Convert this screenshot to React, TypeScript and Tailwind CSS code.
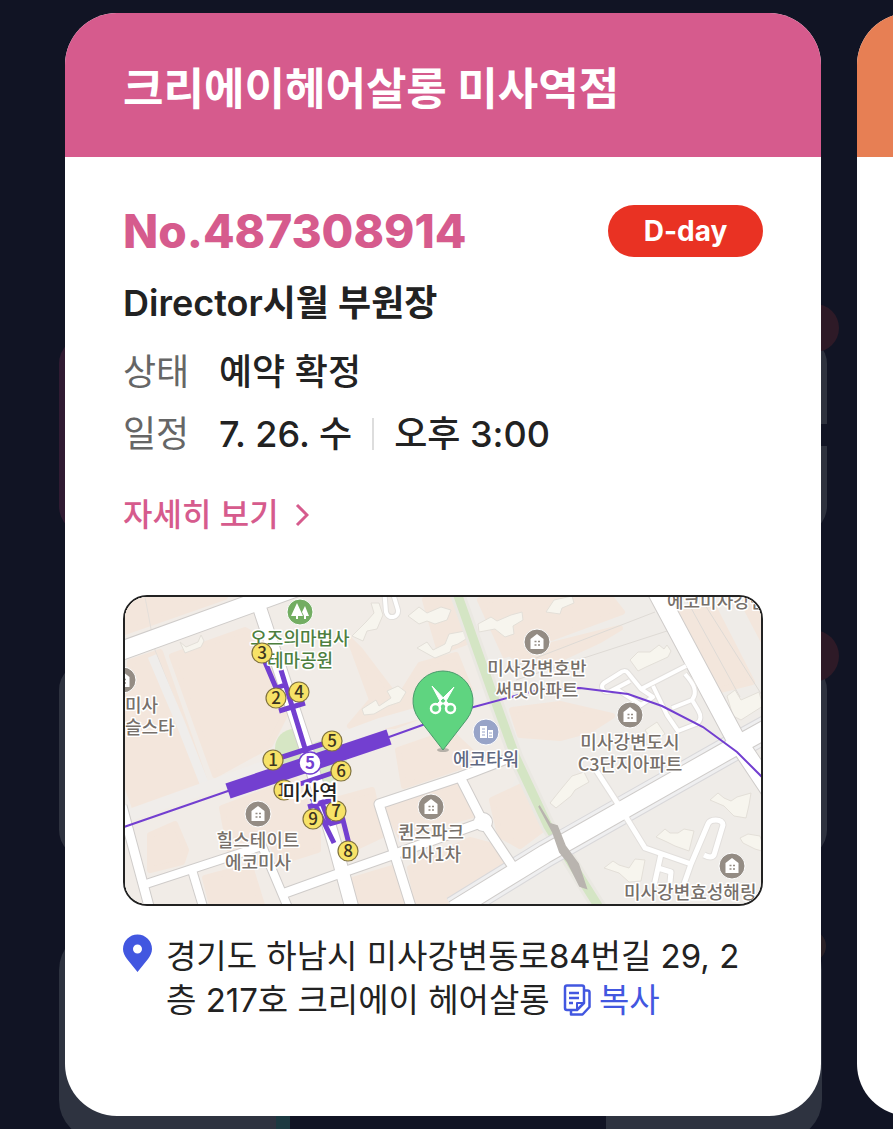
import React from "react";

const details = [
  { label: "상태", values: ["예약 확정"] },
  { label: "일정", values: ["7. 26. 수", "오후 3:00"] },
];

const blocks = [
  "M125 600L225 597L125 632Z",
  "M130 662L160 652L186 727L205 782L135 808L125 780Z",
  "M172 656L245 630L262 640L285 715L270 745L215 775Z",
  "M150 835L175 824L186 850L182 862L150 870Z",
  "M205 878L250 866L262 905L212 905Z",
  "M222 808L296 780L318 832L318 850L280 862L270 840L230 850Z",
  "M336 800L372 790L382 835L350 850Z",
  "M352 880L392 868L404 905L360 905Z",
  "M350 640L372 700L350 726L395 726L430 712L474 700L456 655L420 665L398 700L360 650Z",
  "M425 600L455 600L472 640L440 652Z",
  "M480 600L610 597L622 612L505 655Z",
  "M386 806L455 783L472 815L400 836Z",
  "M410 868L470 840L500 848L503 868L440 905L418 905Z",
  "M492 800L522 786L548 825L520 846L500 835Z",
  "M512 710L560 704L612 716L590 730L560 738L520 735Z",
  "M512 655L620 628L600 640L540 668Z",
  "M398 750L450 732L480 760L404 786Z",
  "M680 612L712 604L752 682L720 690Z",
  "M742 600L763 597L763 640Z",
];

const buildings = [
  "M180 642l6 5l12 -5l3 -7l3 6l-3 6l-16 6z",
  "M362 709l14 -9l3 6l12 -8l-4 -7l11 -5l8 6l-6 10l-12 4l-14 8l-10 1z",
  "M417 648l10 -6l6 8l12 -6l4 -10l16 -3l1 8l-8 5l-6 2l-2 6l-15 6z",
  "M408 616l11 -9l8 6l14 -6l10 3l-4 10l-12 4l-8 -3l-8 3z",
  "M478 624l13 -7l6 4l14 -6l11 -3l1 8l-10 6l1 8l-9 3l-10 -8l-16 3z",
  "M352 636l14 -14l8 -9l-3 -10l8 0l4 12l-6 14l-10 2l-4 10z",
  "M630 660l8 -8l12 0l9 -7l5 4l3 -4l4 6l-3 6l-22 10l-8 4z",
  "M546 612l8 -12l18 -4l2 7l-12 5l-2 6z",
  "M550 803l12 -15l10 -12l12 -4l5 10l-14 8l-4 6l-15 12z",
  "M710 800l8 -7l6 5l7 3l6 -4l14 -4l-2 12l-3 13l-12 -2l-10 -10z",
  "M656 837l9 -8l5 4l8 0l6 -4l10 2l-5 20l-14 -5l-8 -4z",
  "M604 868l9 -7l6 4l10 3l6 -9l10 1l-4 21l-12 1l-10 -9z",
  "M740 838l8 -4l12 2l5 16l-10 -3l-12 -6z",
  "M645 730l12 -8l8 12l-12 8z",
  "M727 696l8 -6l6 10l18 -8l4 14l-22 14l-8 -4z",
];

const roads = [
  { d: "M118 652L300 586", width: 18 },
  { d: "M259 606L305 745L335 845L352 908", width: 13 },
  { d: "M122 806L150 910", width: 9 },
  { d: "M146 884L262 846L289 910", width: 8 },
  { d: "M192 870L204 910", width: 8 },
  { d: "M285 893L335 875L395 854L483 822", width: 9 },
  { d: "M412 910L379 804L460 777L512 757", width: 9 },
  { d: "M460 777L483 822L515 870", width: 9 },
  { d: "M480 822a3 3 0 1 0 6 0a3 3 0 1 0 -6 0", width: 12 },
  { d: "M454 910L545 854L725 752L770 727", width: 18 },
  { d: "M656 590L734 736L770 790", width: 18 },
  { d: "M384 588L386 612C388 620 399 618 398 610L392 590", width: 4 },
  { d: "M686 666L641 689L628 673C626 670 622 671 620 673L604 683C600 686 603 692 607 692L618 690L641 705L653 697L641 689M609 692L630 681", width: 4 },
  { d: "M653 686L667 715L678 731L696 724C702 721 701 715 698 710L692 700L672 708M692 700C698 692 694 684 685 674", width: 4 },
  { d: "M596 770L618 804", width: 5 },
  { d: "M626 817L645 848L691 864L708 824C710 819 722 818 723 825L714 855C712 858 708 857 704 855M691 864L684 884M661 854L654 886M658 868L671 872L670 882", width: 5 },
];

const exits = [
  { n: 3, x: 262, y: 653 },
  { n: 2, x: 276, y: 698 },
  { n: 4, x: 299, y: 692 },
  { n: 5, x: 332, y: 741 },
  { n: 1, x: 273, y: 760 },
  { n: 6, x: 341, y: 771 },
  { n: 7, x: 336, y: 811 },
  { n: 9, x: 313, y: 819 },
  { n: 8, x: 348, y: 851 },
];

const apartments = [
  [123, 680],
  [537, 642],
  [630, 715],
  [258, 814],
  [431, 807],
  [732, 866],
];

const places = [
  { x: 300, y: 645, lines: ["오즈의마법사", "테마공원"], color: "#4d7f3f" },
  { x: 125, y: 712, lines: ["미사", "슬스타"], color: "#77706a", left: true },
  { x: 537, y: 675, lines: ["미사강변호반", "써밋아파트"], color: "#77706a" },
  { x: 630, y: 749, lines: ["미사강변도시", "C3단지아파트"], color: "#77706a" },
  { x: 486, y: 766, lines: ["에코타워"], color: "#606881" },
  { x: 258, y: 847, lines: ["힐스테이트", "에코미사"], color: "#77706a" },
  { x: 431, y: 839, lines: ["퀸즈파크", "미사1차"], color: "#77706a" },
  { x: 624, y: 899, lines: ["미사강변효성해링"], color: "#77706a", left: true },
  { x: 667, y: 608, lines: ["에코미사강변"], color: "#77706a", left: true },
];

const House = ({ x, y }: { x: number; y: number }) => (
  <g transform={`translate(${x} ${y})`}>
    <circle r="13" fill="#948c84" stroke="#fff" strokeWidth="1" />
    <path d="M-6.500 7V-3L0 -8L6.500 -3V7Z" fill="#fff" />
    <path d="M-2.500 -0.500h2M1 -0.500h2M-2.500 3h2M1 3h2" stroke="#948c84" strokeWidth="1.600" />
  </g>
);

const StoreMap = () => (
  <svg viewBox="125 597 636 307" preserveAspectRatio="xMidYMid slice" className="w-full h-full font-['Noto_Sans_CJK_KR',sans-serif]" role="img" aria-label="미사역">
    <rect x="100" y="580" width="700" height="350" fill="#efece8" />
    <path d="M100 580H440L520 770L440 930H100Z" fill="#f1ece7" />
    {blocks.map((d) => (
      <path key={d} d={d} fill="#f3e6dc" stroke="#f3e6dc" strokeWidth="6" strokeLinejoin="round" />
    ))}
    <path d="M145 597L155 650L184 724L208 785M135 812L205 785L182 722M238 790L370 740" fill="none" stroke="#e4dfda" strokeWidth="1" />
    <path d="M152 656L180 722L206 788" fill="none" stroke="#efedeb" strokeWidth="9" />
    <path d="M130 815L228 780L380 724L500 690" fill="none" stroke="#f0edea" strokeWidth="12" />
    <path d="M510 668L655 612M516 680L670 630" fill="none" stroke="#dedad5" strokeWidth="1" />
    <path d="M700 597L765 700M685 597L740 697" fill="none" stroke="#dedad5" strokeWidth="1" />
    {buildings.map((d) => (
      <path key={d} d={d} fill="#f7f5ee" stroke="#e3dfd8" strokeWidth="1" strokeLinejoin="round" />
    ))}

    {/* park strip */}
    <path d="M456 590L492 692L516 758L548 826L602 912" fill="none" stroke="#eae8e2" strokeWidth="15" />
    <path d="M456 590L492 692L516 758L548 826L602 912" fill="none" stroke="#d4e5c4" strokeWidth="9" />
    <circle cx="294" cy="748" r="19" fill="#d6e6c4" />
    <circle cx="325" cy="762" r="22" fill="#dbe8cc" />

    {/* roads */}
    <path d="M454 910L545 854L725 752L770 727" fill="none" stroke="#d9d8da" strokeWidth="28" />
    <path d="M454 910L545 854L725 752L770 727" fill="none" stroke="#efeff0" strokeWidth="26" />
    {roads.map((road) => (
      <path key={road.d} d={road.d} fill="none" stroke={road.width > 5 ? "#cfccca" : "#e2dfdc"} strokeWidth={road.width + 2} strokeLinejoin="round" />
    ))}
    {roads.map((road) => (
      <path key={road.d} d={road.d} fill="none" stroke="#fff" strokeWidth={road.width} strokeLinejoin="round" />
    ))}
    <path d="M539 806L550 824L557 826L565 846L578 864L586 888L580 886L568 862L560 852L553 832Z" fill="#b9b4af" stroke="#b9b4af" strokeWidth="2" />

    {/* subway */}
    <g fill="none" stroke="#733fd0">
      <path d="M118 829L228 791L389 737L470 708L530 692Q555 688 580 688L628 694L662 706L703 727L737 752L765 780" strokeWidth="2" />
      <path d="M228 791L389 737" strokeWidth="16" />
      <path d="M265 662L276 688L285 685M281 670L307 755M279 711L305 703M273 760L332 741M300 784L341 770M312 798L334 843M308 807L332 800M321 800L330 825M329 824L343 820L349 844" strokeWidth="5" />
    </g>

    {places.map((place) => (
      <text
        key={place.lines[0]}
        fill={place.color}
        stroke="#fff"
        strokeWidth="3"
        strokeLinejoin="round"
        paintOrder="stroke"
        fontSize="18"
        fontWeight="500"
        textAnchor={place.left ? "start" : "middle"}
      >
        {place.lines.map((line, i) => (
          <tspan key={line} x={place.x} y={place.y + i * 22}>{line}</tspan>
        ))}
      </text>
    ))}

    {apartments.map(([x, y]) => (
      <House key={`${x}-${y}`} x={x} y={y} />
    ))}

    <circle cx="300" cy="612" r="13" fill="#73ad62" stroke="#fff" strokeWidth="1" />
    <path d="M297 603L291 616H296V619H298V616H303ZM305 606L302 612L304 616V619H306V616H309Z" fill="#fff" />

    <circle cx="486" cy="732" r="13" fill="#98a4c8" stroke="#fff" strokeWidth="1" />
    <path d="M480 726h7v12h-7zM488 730h5v8h-5z" fill="#fff" />
    <path d="M482 729h3M482 732h3M482 735h3M489 733h3M489 736h3" stroke="#98a4c8" strokeWidth="1" />

    <circle cx="284" cy="790" r="10" fill="#f7e267" stroke="#82743f" strokeWidth="1.200" />
    <text x="277" y="796" fontSize="17" fontWeight="500" fill="#3d3520">1</text>
    {exits.map((exit) => (
      <g key={exit.n}>
        <circle cx={exit.x} cy={exit.y} r="10" fill="#f7e267" stroke="#82743f" strokeWidth="1.200" />
        <text x={exit.x} y={exit.y + 6} textAnchor="middle" fontSize="17" fontWeight="500" fill="#3d3520">{exit.n}</text>
      </g>
    ))}

    <circle cx="310" cy="763" r="11" fill="#fff" stroke="#733fd0" strokeWidth="1.500" />
    <text x="310" y="769" textAnchor="middle" fontSize="17" fontWeight="700" fill="#733fd0">5</text>
    <text x="310" y="800" textAnchor="middle" fontSize="20" fontWeight="500" fill="#222" stroke="#fff" strokeWidth="4" strokeLinejoin="round" paintOrder="stroke">미사역</text>

    {/* store pin */}
    <ellipse cx="443" cy="750" rx="6" ry="2" fill="#b5b0a8" />
    <path d="M443 750L419 719A30 30 0 1 1 467 719Z" fill="#5fd480" stroke="#4a9a6c" strokeWidth="1" />
    <g fill="none" stroke="#fff">
      <circle cx="435.500" cy="708.500" r="4.500" strokeWidth="2.500" />
      <circle cx="450.500" cy="708.500" r="4.500" strokeWidth="2.500" />
    </g>
    <path d="M432 686L449 704L446 706L440 701ZM454 687L443 698L440 701L437 704L440 706L446 701Z" fill="#fff" stroke="#fff" strokeWidth="1" strokeLinejoin="round" />
    <circle cx="443" cy="700" r="1" fill="#5fd480" />
  </svg>
);

const Backdrop = () => (
  <div className="absolute inset-0 overflow-hidden pl-[59px] pr-[66px] pt-[336px]" aria-hidden="true">
    <div className="relative h-[198px] rounded-[28px] bg-gradient-to-r from-[#301b32] to-[#2e323e]">
      <span className="absolute -top-8 -right-3 w-12 h-12 rounded-full bg-[#2e1a27]" />
      <span className="absolute top-[88px] right-0 w-12 h-[22px] bg-[#111424]" />
    </div>
    <div className="relative mt-32 h-[196px] rounded-[28px] bg-[#2e323f]">
      <span className="absolute -top-8 -right-3 w-[52px] h-[52px] rounded-full bg-[#2e1a27]" />
    </div>
    <div className="relative mt-[72px] mr-[5px] h-[210px] rounded-[40px] bg-[#2e3340] flex items-end justify-center">
      <span className="absolute top-0 -right-1 w-8 h-8 rounded-full bg-[#2a2127]" />
      <div className="w-[330px] h-[60px] border-l-[14px] border-[#1c3941] bg-[#111424]" />
    </div>
  </div>
);

const App = () => {
  return (
    <div className="relative min-h-screen overflow-hidden bg-[#111424] font-['Inter','Noto_Sans_CJK_KR',sans-serif] text-[#222]">
      <Backdrop />
      <main className="relative flex gap-9 pl-[65px] pt-[13px] pb-[13px]">
        <article className="flex-1 min-w-0 rounded-[52px] overflow-hidden bg-white">
          <header className="px-[58px] pt-12 pb-10 bg-[#d65b8d]">
            <h1 className="text-[44px] leading-[56px] font-bold text-white">크리에이헤어살롱 미사역점</h1>
          </header>

          <div className="px-[58px] pt-12 pb-[94px]">
            <div className="flex items-center justify-between">
              <p className="text-[46px] leading-[52px] font-extrabold text-[#d65b8d]">No.487308914</p>
              <span className="flex items-center justify-center w-[155px] h-[52px] rounded-full bg-[#e93223] text-[28px] font-bold text-white">
                D-day
              </span>
            </div>
            <h2 className="mt-5 text-[36px] leading-[52px] font-semibold">Director시월 부원장</h2>

            <dl className="mt-3 text-[36px] leading-[62px]">
              {details.map((item) => (
                <div key={item.label} className="flex">
                  <dt className="w-24 text-[#666]">{item.label}</dt>
                  <dd className="flex items-center font-medium">
                    {item.values.map((value, i) => (
                      <React.Fragment key={value}>
                        {i > 0 && <span className="w-[2px] h-8 mx-5 bg-[#ddd]" />}
                        <span>{value}</span>
                      </React.Fragment>
                    ))}
                  </dd>
                </div>
              ))}
            </dl>

            <a href="#detail" className="mt-7 flex items-center gap-4 w-fit text-[32px] leading-[44px] font-medium text-[#d65b8d]">
              자세히 보기
              <svg width="14" height="24" viewBox="0 0 14 24" fill="none" stroke="currentColor" strokeWidth="3" aria-hidden="true">
                <path d="M2 2L12 12L2 22" />
              </svg>
            </a>

            <div className="mt-[58px] h-[311px] border-2 border-[#222] rounded-[24px] overflow-hidden">
              <StoreMap />
            </div>

            <div className="mt-7 flex gap-[14px]">
              <svg width="29" height="38" viewBox="0 0 29 38" className="shrink-0" aria-hidden="true">
                <path fillRule="evenodd" d="M14.500 38L4 25C1.500 21.500 0 18.500 0 15A14.500 14.500 0 0 1 29 15C29 18.500 27.500 21.500 25 25ZM14.500 10.500a4.500 4.500 0 1 0 0 9a4.500 4.500 0 1 0 0 -9Z" fill="#4257e0" />
              </svg>
              <address className="not-italic text-[33px] leading-[44px]">
                경기도 하남시 미사강변동로84번길 29, 2
                <br />
                층 217호 크리에이 헤어살롱{" "}
                <button type="button" className="ml-1 text-[#4257e0]">
                  <svg width="28" height="32" viewBox="0 0 28 32" fill="none" stroke="currentColor" strokeWidth="2.500" strokeLinejoin="round" className="inline-block align-[-4px] mr-2" aria-hidden="true">
                    <path d="M4 1.500H19Q21 1.500 21 3.500V19L14 26H4Q2 26 2 24V3.500Q2 1.500 4 1.500Z" />
                    <path d="M21 19H14V26" strokeWidth="2" />
                    <path d="M21 6.500H24.500Q26.500 6.500 26.500 8.500V23L19.500 30.500H8V26" />
                    <path d="M6 9H16M6 14H16M6 19H10" />
                  </svg>
                  복사
                </button>
              </address>
            </div>
          </div>
        </article>

        <div className="w-9 shrink-0 flex">
          <div className="w-[756px] shrink-0 rounded-[52px] overflow-hidden bg-white">
            <div className="h-36 bg-[#e77f54]" />
          </div>
        </div>
      </main>
    </div>
  );
};

export default App;
